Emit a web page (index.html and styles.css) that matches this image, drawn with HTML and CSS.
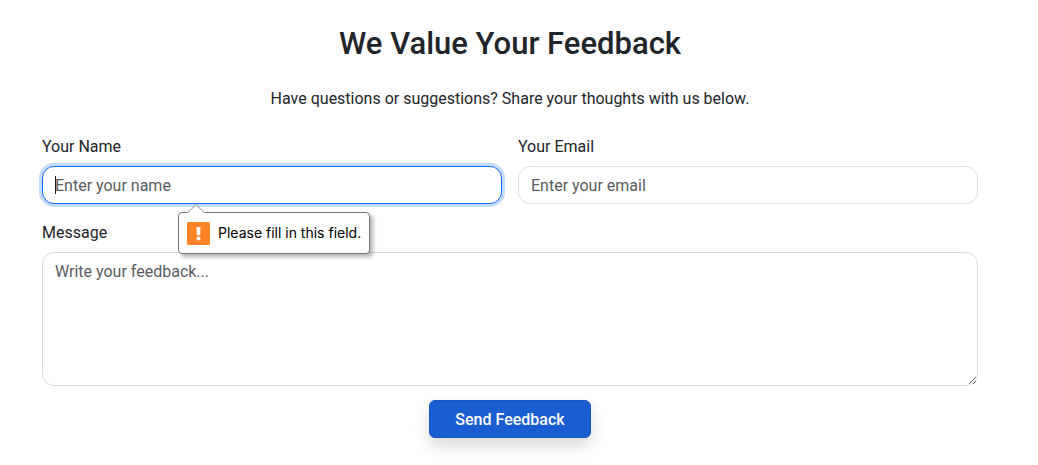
FILE: index.html
```html
<!DOCTYPE html>
<html lang="en">
<head>
<meta charset="utf-8">
<meta name="viewport" content="width=device-width, initial-scale=1">
<title>Feedback</title>
<link rel="stylesheet" href="styles.css">
</head>
<body>
<main class="feedback">
  <h2 class="title">We Value Your Feedback</h2>
  <p class="lead">Have questions or suggestions? Share your thoughts with us below.</p>
  <form class="form" novalidate>
    <div class="row">
      <div class="field">
        <label for="name">Your Name</label>
        <div class="control-wrap">
          <input class="control active" id="name" type="text" placeholder="Enter your name" aria-describedby="name-hint" required autofocus>
          <span class="caret"></span>
          <div class="bubble" id="name-hint" role="alert">
            <svg class="arrow" width="18" height="9" viewBox="0 0 18 9" aria-hidden="true"><path d="M0 9 L1 8.5 L9 .5 L17 8.5 L18 9Z" fill="#fff"/><path d="M1 8.5 L9 .5 L17 8.5" fill="none" stroke="#8a8a8a"/></svg>
            <svg width="23" height="23" viewBox="0 0 23 23" aria-hidden="true"><rect width="23" height="23" rx="1.5" fill="#ff8427"/><path d="M9.5 5h4l-.3 8.2H9.8z" fill="#fff"/><rect x="9.6" y="14.8" width="3.8" height="3.4" rx="1" fill="#fff"/></svg>
            <span>Please fill in this field.</span>
          </div>
        </div>
      </div>
      <div class="field">
        <label for="email">Your Email</label>
        <input class="control" id="email" type="email" placeholder="Enter your email" required>
      </div>
    </div>
    <div class="field">
      <label for="message">Message</label>
      <textarea class="control message" id="message" rows="5" placeholder="Write your feedback..." required></textarea>
    </div>
    <button class="submit" type="submit">Send Feedback</button>
  </form>
</main>
</body>
</html>
```
FILE: styles.css
```css
* { box-sizing: border-box; }
body {
  margin: 0;
  padding-right: 18px;
  background: #fff;
  color: #212529;
  font: 400 16px/24px Roboto, sans-serif;
}
.feedback {
  max-width: 960px;
  margin: 0 auto;
  padding: 25px 12px 24px;
}
.title {
  margin: 0 0 24px;
  font-size: 31px;
  font-weight: 500;
  line-height: 38px;
  text-align: center;
}
.lead { margin: 0 0 24px; text-align: center; }
.form { display: flex; flex-direction: column; gap: 17px; }
.row { display: grid; grid-template-columns: 1fr 1fr; gap: 16px; }
.field { display: flex; flex-direction: column; gap: 7px; }
.control-wrap { position: relative; }
.control {
  display: block;
  width: 100%;
  height: 38px;
  padding: 6px 12px;
  border: 1px solid #dee2e6;
  border-radius: 12px;
  background: #fff;
  color: #212529;
  font: inherit;
  outline: none;
}
.control::placeholder { color: #595c5f; opacity: 1; }
.control.active {
  border-color: #0d6efd;
  box-shadow: 0 0 0 3px #c2dbfe;
  caret-color: transparent;
}
.caret {
  position: absolute;
  left: 13px;
  top: 10px;
  width: 1px;
  height: 18px;
  background: #212529;
}
.message { height: 134px; padding-top: 7px; resize: vertical; border-color: #dcdcdc; }
.bubble {
  position: absolute;
  z-index: 2;
  left: 136px;
  top: 46px;
  display: flex;
  align-items: center;
  gap: 8px;
  height: 42px;
  padding: 0 8px;
  border: 1px solid #777;
  border-radius: 4px;
  background: #fff;
  box-shadow: 3px 3px 4px rgba(0, 0, 0, .3);
  color: #000;
  font-family: Inter, sans-serif;
  font-size: 14px;
  white-space: nowrap;
}
.arrow { position: absolute; left: 8px; top: -9px; }
.submit {
  align-self: center;
  height: 38px;
  margin-top: -3px;
  padding: 2px 25px 0;
  border: 1px solid #1856bd;
  border-radius: 6px;
  background: #1a5dd0;
  box-shadow: 0 8px 16px rgba(0, 0, 0, .15);
  color: #fff;
  font: inherit;
  font-weight: 500;
}
```
